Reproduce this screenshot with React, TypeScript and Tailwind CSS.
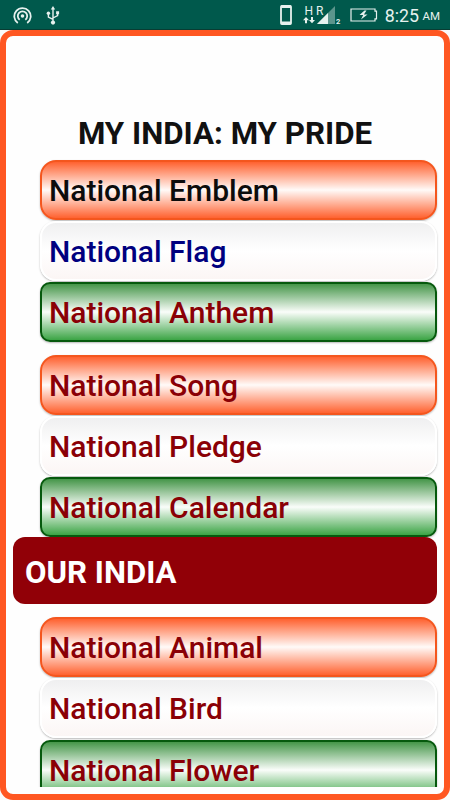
import { clsx } from 'clsx'

type Tone = 'saffron' | 'white' | 'green'

const TONES: Record<Tone, string> = {
  saffron:
    'rounded-[16px] border-[#f4561e] bg-[linear-gradient(180deg,#ff5722_0%,#fffaf8_50%,#ff5722_100%)]',
  white:
    'rounded-[16px] border-white bg-[linear-gradient(180deg,#eeeeef_0%,#ffffff_50%,#fbf5f4_100%)]',
  green:
    'rounded-[10px] border-[#06590d] bg-[linear-gradient(180deg,#388e3c_0%,#fafdfa_50%,#2e9e38_100%)]',
}

const SYMBOLS: { label: string; tone: Tone; color: string }[] = [
  { label: 'National Emblem', tone: 'saffron', color: 'text-[#0c0c0c]' },
  { label: 'National Flag', tone: 'white', color: 'text-[#00007f]' },
  { label: 'National Anthem', tone: 'green', color: 'text-[#8a0006]' },
]

const SONGS: typeof SYMBOLS = [
  { label: 'National Song', tone: 'saffron', color: 'text-[#8a0006]' },
  { label: 'National Pledge', tone: 'white', color: 'text-[#8a0006]' },
  { label: 'National Calendar', tone: 'green', color: 'text-[#8a0006]' },
]

const NATURE: typeof SYMBOLS = [
  { label: 'National Animal', tone: 'saffron', color: 'text-[#8a0006]' },
  { label: 'National Bird', tone: 'white', color: 'text-[#8a0006]' },
  { label: 'National Flower', tone: 'green', color: 'text-[#8a0006]' },
]

function ButtonGroup({ items, className }: { items: typeof SYMBOLS; className?: string }) {
  return (
    <div className={clsx('ml-[27px] flex shrink-0 flex-col gap-[1.4px]', className)}>
      {items.map(({ label, tone, color }) => (
        <button
          key={label}
          className={clsx(
            'flex h-[60px] shrink-0 items-center border-2 bg-origin-border pl-[7px] pt-[2px] text-left text-[30px] font-medium leading-none shadow-[0_1px_2px_rgba(0,0,0,0.28)]',
            TONES[tone],
            color,
          )}
        >
          {label}
        </button>
      ))}
    </div>
  )
}

function StatusBar() {
  return (
    <header className="flex h-[30px] shrink-0 items-center justify-between border-b border-[#083c33] bg-[#00594c] pl-[13px] pr-[10px] pt-[1px] text-[#e6f1ee]">
      <div className="flex items-center gap-[14px]">
        {/* Hotspot */}
        <svg width="19" height="19" viewBox="0 0 19 19" fill="none" stroke="currentColor" strokeWidth="1.8">
          <path d="M4.8 17A8.2 8.2 0 1 1 14.2 17" />
          <path d="M6.7 13.8A4.7 4.7 0 1 1 12.3 13.8" />
          <circle cx="9.5" cy="10" r="1.8" fill="currentColor" stroke="none" />
        </svg>
        {/* USB */}
        <svg width="14" height="19" viewBox="0 0 14 19" fill="none" stroke="currentColor" strokeWidth="1.4">
          <path d="M7 3v13M7 13.4l-4.6-2.4V8M7 12l4.6-2.4V7" />
          <path d="M7 0l2.2 3.6H4.8zM10.1 5.2h3v3h-3z" fill="currentColor" stroke="none" />
          <circle cx="2.4" cy="7.2" r="1.7" fill="currentColor" stroke="none" />
          <circle cx="7" cy="16.6" r="2.1" fill="currentColor" stroke="none" />
        </svg>
      </div>
      <div className="flex items-center">
        {/* Phone */}
        <svg width="12" height="20" viewBox="0 0 12 20" fill="none" stroke="currentColor">
          <rect x="1" y="1" width="10" height="18" rx="0.8" strokeWidth="1.8" />
          <path d="M1 1.8h10M1 17.8h10" strokeWidth="2.6" />
        </svg>
        {/* Mobile signal */}
        <svg className="ml-[11px]" width="38" height="20" viewBox="0 0 38 20" fill="currentColor">
          <path d="M32 1v18H14z" opacity="0.4" />
          <path d="M25 8v11H14z" />
          <text x="1.5" y="10" fontSize="12" fontFamily="Roboto, sans-serif">H</text>
          <text x="13" y="9.5" fontSize="12" fontFamily="Roboto, sans-serif">R</text>
          <path d="M3 12l3 3.2H4v3.1H2v-3.1H0zM9 18.3l-3-3.2h2V12h2v3.1h2z" />
          <text x="33" y="18.5" fontSize="7.5" fontWeight="700" fontFamily="Roboto, sans-serif">2</text>
        </svg>
        {/* Charging battery */}
        <svg className="ml-[9px]" width="28" height="14" viewBox="0 0 28 14" fill="none" stroke="currentColor" strokeWidth="1.2">
          <path d="M1 1h24v2.2h1.5v7.6H25V13H1z" />
          <path d="M14.5 2.5L9.5 7h3.7l-2.2 4.5L17.5 6.4h-3.6l2.6-3.9z" fill="currentColor" stroke="none" />
        </svg>
        <span className="ml-[7px] whitespace-nowrap pt-[1px] text-[17.8px] leading-none">8:25</span>
        <span className="ml-[3.5px] pt-[4px] text-[11.5px] leading-none">AM</span>
      </div>
    </header>
  )
}

export default function App() {
  return (
    <div className="flex h-[800px] w-[450px] flex-col overflow-hidden bg-[#fafafa] font-['Roboto',sans-serif]">
      <StatusBar />
      <main className="flex min-h-0 flex-1 flex-col rounded-[13px] border-[6px] border-[#ff5722] bg-[#fefefe] pb-[7px]">
        <div className="flex min-h-0 flex-1 flex-col overflow-hidden pl-[7px] pr-[7px] pt-[80px]">
          <h1 className="h-[43.5px] shrink-0 pt-[2px] text-center text-[31.3px] font-bold leading-[32px] text-[#111111]">
            MY INDIA: MY PRIDE
          </h1>
          <ButtonGroup items={SYMBOLS} />
          <ButtonGroup items={SONGS} className="mt-[12.3px]" />
          <h2 className="flex h-[66.5px] shrink-0 items-center rounded-[12px] bg-[#910007] pl-[12px] pt-[4px] text-[31.2px] font-bold leading-none text-white">
            OUR INDIA
          </h2>
          <ButtonGroup items={NATURE} className="mt-[13px]" />
        </div>
      </main>
    </div>
  )
}
